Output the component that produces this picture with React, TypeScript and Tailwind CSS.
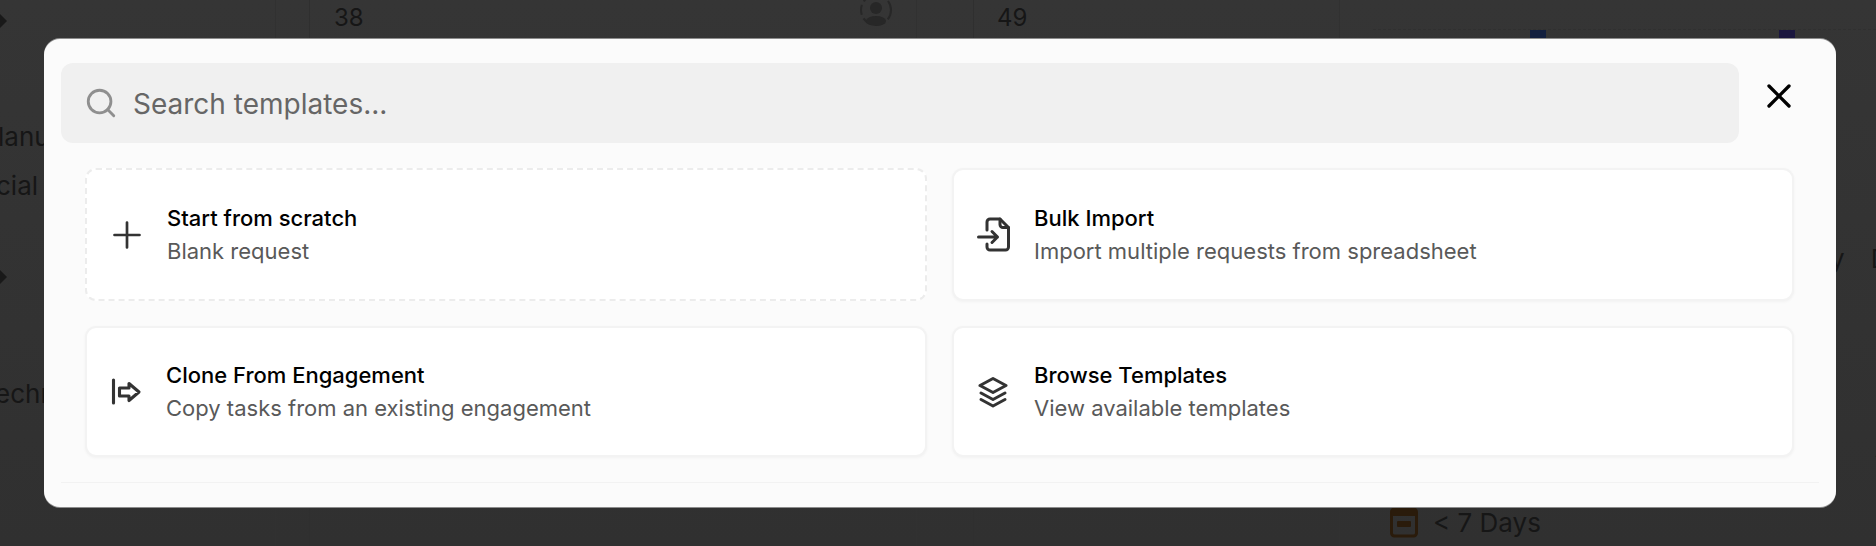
import { Search, X } from "lucide-react";
import type { ReactNode } from "react";

const PlusIcon = () => (
  <svg width="38" height="38" viewBox="0 0 38 38" fill="none" stroke="currentColor" strokeWidth="2.7" strokeLinecap="round">
    <path d="M3.5 19H28.5M16 6.5V31.5" />
  </svg>
);

const ImportIcon = () => (
  <svg width="38" height="38" viewBox="0 0 38 38" fill="none" stroke="currentColor" strokeWidth="3" strokeLinecap="round" strokeLinejoin="round" className="overflow-visible">
    <path d="M9 14V6a3 3 0 0 1 3-3H22L30.5 11.5V31a3 3 0 0 1-3 3H12a3 3 0 0 1-3-3V28" />
    <path d="M22 3V8.5a3 3 0 0 0 3 3H30.5" />
    <path d="M0.5 21H19.5M14 15.5L19.5 21L14 26.5" />
  </svg>
);

const CloneIcon = () => (
  <svg width="38" height="38" viewBox="0 0 38 38" fill="none" stroke="currentColor" strokeWidth="3.1" strokeLinecap="round" strokeLinejoin="round">
    <path d="M2.5 7V30" />
    <path d="M8.5 15H18V10.5L28 19L18 27.5V23H8.5Z" />
  </svg>
);

const StackIcon = () => (
  <svg width="38" height="38" viewBox="0 0 38 38" fill="none" stroke="currentColor" strokeWidth="3" strokeLinecap="round" strokeLinejoin="round">
    <path d="M15 5.5L28 12.5L15 19.5L2 12.5Z" />
    <path d="M3 20L15 26.5L27 20" />
    <path d="M3 26.5L15 33L27 26.5" />
  </svg>
);

const Arrow = () => (
  <svg width="7" height="14" viewBox="0 0 7 14" className="shrink-0 fill-[#191919]">
    <path d="M0 0L7 7L0 14Z" />
  </svg>
);

const Avatar = () => (
  <svg width="32" height="32" viewBox="0 0 32 32" fill="none" className="-mt-[6px] text-[#272727]">
    <circle cx="16" cy="16" r="15" stroke="currentColor" strokeWidth="2" strokeDasharray="10 4" />
    <circle cx="16" cy="14" r="6" fill="currentColor" />
    <ellipse cx="16" cy="27" rx="10" ry="5" fill="currentColor" />
  </svg>
);

const DueIcon = () => (
  <svg width="28" height="34" viewBox="0 0 28 34" fill="none" className="-mt-[4px] text-[#2a1b0b]">
    <rect x="1.5" y="5" width="25" height="27" rx="3" stroke="currentColor" strokeWidth="3" />
    <path d="M8 1V6M20 1V6" stroke="currentColor" strokeWidth="3" />
    <rect x="1.5" y="5" width="25" height="7" fill="currentColor" />
    <rect x="7" y="17" width="14" height="6" rx="1" fill="currentColor" />
  </svg>
);

type CardProps = {
  icon: ReactNode;
  title: string;
  desc: string;
  dashed?: boolean;
  narrow?: boolean;
};

const Card = ({ icon, title, desc, dashed, narrow }: CardProps) => (
  <button
    className={`flex items-center rounded-[11px] border-2 bg-white pl-6 text-left ${
      dashed ? "border-dashed border-[#ececec]" : "border-[#f3f3f3] shadow-[0_1px_3px_rgba(0,0,0,0.04)]"
    }`}
  >
    <span className={`shrink-0 text-[#333333] ${narrow ? "mr-[17px] w-[38px]" : "mr-[18px] w-[38px]"}`}>{icon}</span>
    <span className="-mt-[1px] flex flex-col gap-[7px]">
      <span className="text-[22px] leading-[26px] font-medium text-black">{title}</span>
      <span className="text-[22px] leading-[26px] text-[#595959]">{desc}</span>
    </span>
  </button>
);

const App = () => (
  <div className="relative h-[546px] w-[1876px] overflow-hidden bg-linear-to-b from-[#353535] to-[#303030] font-['Inter',sans-serif] text-[#161616]">
    {/* page behind the dialog */}
    <div className="flex h-full">
      <aside className="flex w-[275px] shrink-0 flex-col items-start overflow-hidden text-[26px] leading-[32px]">
        <div className="mt-[14px]"><Arrow /></div>
        <span className="mt-[93px] -ml-[2px]">lanu</span>
        <span className="mt-[17px] -ml-[4px]">cial</span>
        <div className="mt-[68px]"><Arrow /></div>
        <span className="mt-[94px] -ml-[5px]">echn</span>
      </aside>
      <div className="grid flex-1 grid-cols-[34px_607px_57px_366px_537px]">
        <div className="border-l border-[#313131]" />
        <div className="flex items-start justify-between border-l border-[#2f2f2f] pr-[24px] pl-[24px] text-[24px] leading-[36px]">
          <span>38</span>
          <Avatar />
        </div>
        <div className="border-l border-[#313131]" />
        <div className="border-l border-[#2f2f2f] pl-[23px] text-[24px] leading-[36px]">49</div>
        <div className="flex flex-col overflow-hidden border-l border-[#313131] text-[26px] leading-[32px]">
          <div className="mt-[29px] ml-[33px] flex h-[10px] gap-[233px] border-t border-dashed border-[#303030] pl-[157px]">
            <span className="h-full w-4 bg-[#13203f]" />
            <span className="h-full w-4 bg-[#1b173f]" />
          </div>
          <div className="mt-[204px] flex gap-[26px] pl-[490px]">
            <span>y</span>
            <span>D</span>
          </div>
          <span className="mt-[157px] pl-[535px]">A</span>
          <div className="mt-[43px] flex items-center gap-[15px] pl-[50px]">
            <DueIcon />
            <span>&lt; 7 Days</span>
          </div>
        </div>
      </div>
    </div>

    {/* dialog */}
    <div className="absolute top-[39px] left-[44px] h-[468px] w-[1792px] rounded-[16px] bg-[#fbfbfb] px-[17px] pt-[24px] shadow-[0_-1px_0_#8c8c8c,0_1px_0_#8c8c8c]">
      <div className="flex items-start">
        <div className="flex h-[80px] w-[1678px] items-center rounded-[12px] bg-[#f0f0f0] pl-[23px] text-[#8f8f8f]">
          <Search size={34} strokeWidth={2} />
          <span className="mt-[2px] ml-[15px] text-[28px] text-[#666666]">Search templates...</span>
        </div>
        <X size={40} strokeWidth={2} className="mt-[13px] ml-[20px] text-black" />
      </div>
      <div className="mt-[25px] grid grid-cols-[842px_842px] grid-rows-[133px_131px] gap-[25px] px-[24px]">
        <Card dashed icon={<PlusIcon />} title="Start from scratch" desc="Blank request" />
        <Card icon={<ImportIcon />} title="Bulk Import" desc="Import multiple requests from spreadsheet" />
        <Card narrow icon={<CloneIcon />} title="Clone From Engagement" desc="Copy tasks from an existing engagement" />
        <Card icon={<StackIcon />} title="Browse Templates" desc="View available templates" />
      </div>
      <div className="mt-[25px] h-px bg-[#f2f2f2]" />
    </div>
  </div>
);

export default App;
